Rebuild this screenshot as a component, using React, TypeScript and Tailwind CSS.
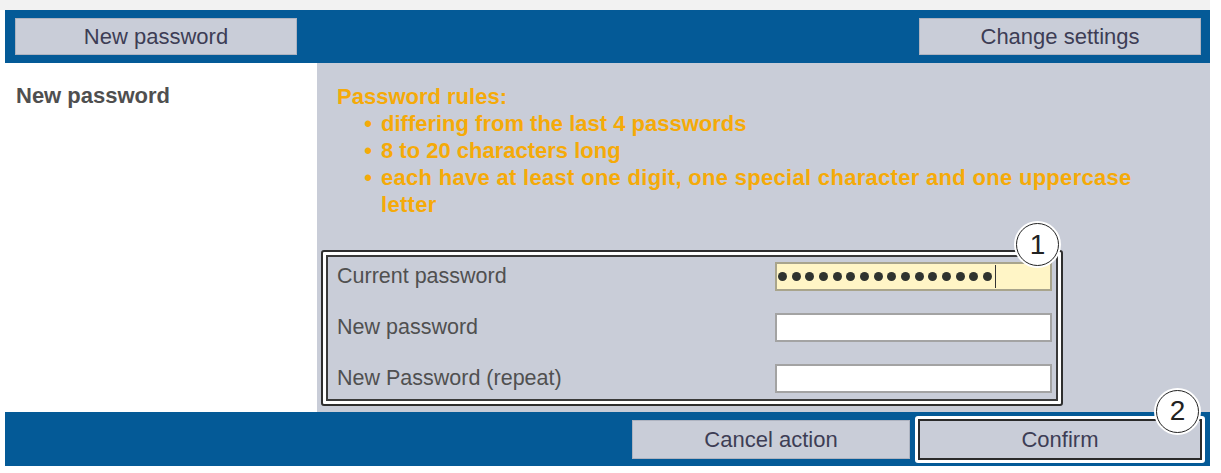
import React from "react";

const BLUE = "bg-[#045a97]";

function HeaderButton({ children }: { children: React.ReactNode }) {
  return (
    <div className="w-[282px] h-[37px] bg-[#c9cdd8] border border-[#aeb3c0] flex items-center justify-center text-[22px] text-[#3d3d55]">
      {children}
    </div>
  );
}

function Row({ label, children }: { label: string; children: React.ReactNode }) {
  return (
    <div className="flex items-center justify-between h-[29px]">
      <span className="text-[21.5px] text-[#505050] leading-none">{label}</span>
      {children}
    </div>
  );
}

function EmptyInput() {
  return <div className="w-[277px] h-[29px] bg-white border-2 border-[#a3a3a3]" />;
}

function Callout({ n }: { n: string }) {
  return (
    <div className="w-[43px] h-[43px] rounded-full bg-white border-[1.5px] border-[#222] ring-2 ring-white flex items-center justify-center text-[28px] text-[#222] leading-none">
      {n}
    </div>
  );
}

export default function App() {
  const dots = Array.from({ length: 16 });
  return (
    <div className="w-[1221px] h-[473px] bg-white font-['Liberation_Sans',Arial,sans-serif] overflow-hidden">
      <div className="h-[10px] w-[1210px] bg-[#f2f2f2]" />
      <div className="ml-[5px] w-[1205px] flex flex-col">
        {/* header bar */}
        <div className={`${BLUE} h-[53px] flex items-center justify-between pl-[10px] pr-[9px]`}>
          <HeaderButton>New password</HeaderButton>
          <HeaderButton>Change settings</HeaderButton>
        </div>

        {/* main */}
        <div className="flex h-[349px]">
          <div className="w-[312px] bg-white pl-[11px] pt-[20px]">
            <div className="text-[22px] leading-[26px] font-bold text-[#4f4f4f]">New password</div>
          </div>
          <div className="flex-1 bg-[#c9cdd8] pt-[20px] flex flex-col">
            <div className="pl-[20px] pr-[50px] text-[22px] leading-[27px] font-bold text-[#f5aa08]">
              <div>Password rules:</div>
              <ul>
                <li className="flex">
                  <span className="w-[44px] shrink-0 text-right pr-[9px]">•</span>
                  <span>differing from the last 4 passwords</span>
                </li>
                <li className="flex">
                  <span className="w-[44px] shrink-0 text-right pr-[9px]">•</span>
                  <span>8 to 20 characters long</span>
                </li>
                <li className="flex">
                  <span className="w-[44px] shrink-0 text-right pr-[9px]">•</span>
                  <span className="tracking-[0.3px]">each have at least one digit, one special character and one uppercase letter</span>
                </li>
              </ul>
            </div>

            {/* fieldset */}
            <div className="relative ml-[4px] mt-[32px] w-[742px] h-[156px] border-2 border-[#2e2e2e] rounded-[3px] bg-white p-[3px]">
              <div className="h-full border-2 border-[#3a3a3a] bg-[#c9cdd8] pl-[9px] pr-[4px] pt-[5px] flex flex-col gap-[22px]">
                <Row label="Current password">
                  <div className="w-[277px] h-[29px] bg-[#fff5c6] border-2 border-[#a8a48c] flex items-center pl-[1px]">
                    <div className="flex items-center gap-[4.67px]">
                      {dots.map((_, i) => (
                        <div key={i} className="w-[9px] h-[9px] rounded-full bg-[#2f332f]" />
                      ))}
                    </div>
                    <div className="ml-[3px] w-[1.5px] h-[23px] bg-[#333]" />
                  </div>
                </Row>
                <Row label="New password">
                  <EmptyInput />
                </Row>
                <Row label="New Password (repeat)">
                  <EmptyInput />
                </Row>
              </div>
              <div className="absolute left-[693px] top-[-29px]">
                <Callout n="1" />
              </div>
            </div>
          </div>
        </div>

        {/* footer bar */}
        <div className={`${BLUE} h-[54px] flex items-center justify-end gap-[5px] pr-[5px]`}>
          <div className="w-[278px] h-[39px] bg-[#c9cdd8] border border-[#aeb3c0] flex items-center justify-center text-[22px] text-[#3d3d55]">
            Cancel action
          </div>
          <div className="relative w-[290px] h-[47px] border-[3px] border-white rounded-[3px]">
            <div className="h-full border-2 border-[#2a2a2a] bg-[#c9cdd8] flex items-center justify-center text-[22px] text-[#3d3d55]">
              Confirm
            </div>
            <div className="absolute left-[238px] top-[-29px]">
              <Callout n="2" />
            </div>
          </div>
        </div>
      </div>
    </div>
  );
}
